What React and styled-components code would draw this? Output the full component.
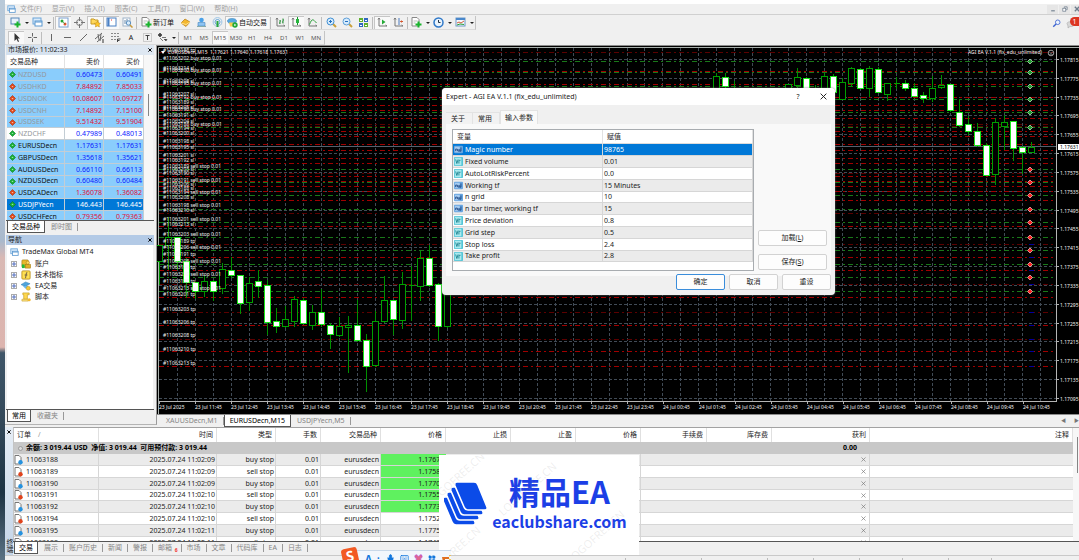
import React, { useState } from 'react'
import styled, { createGlobalStyle } from 'styled-components'
import { Mic, Keyboard, Shirt, LayoutGrid } from 'lucide-react'


const GlobalStyle = createGlobalStyle`
  * { box-sizing: border-box; }
  body {
    margin: 0;
    overflow: hidden;
    background: #f0f0f0;
    color: #1c1c1c;
    font: 7px/10px "Noto Sans", "Noto Sans CJK SC", sans-serif;
  }
  button {
    font: inherit;
    color: inherit;
    background: none;
    border: 0;
    padding: 0;
    margin: 0;
  }
  svg { display: block; flex: none; }
  table { border-collapse: separate; border-spacing: 0; table-layout: fixed; width: 100%; }
  th, td { padding: 0; font-weight: inherit; white-space: nowrap; overflow: hidden; }
`

const Screen = styled.div`
  display: flex;
  height: 100vh;
`

const Desktop = styled.div`
  width: 5px;
  flex: none;
  background: linear-gradient(#b9c9d8 0, #b4c4d6 30%, #a9b9cc 43%, #d9b9b4 46%, #dcb4ae 62%, #3f5668 63%, #34495a 75%, #1c3344 88%, #5b7284 100%);
`

const Window = styled.div`
  flex: 1;
  min-width: 0;
  display: flex;
  flex-direction: column;
  position: relative;
  overflow: hidden;
  border-top: 4px solid #fff;
`

/* ---------- menu and toolbars ---------- */

const MenuBar = styled.nav`
  display: flex;
  align-items: center;
  gap: 10px;
  height: 11px;
  flex: none;
  padding-left: 2px;
  border-bottom: 1px solid #d0d0d0;
  color: #a2a2a2;
  > svg { margin-right: -6px; }
`

const WindowControls = styled.div`
  display: flex;
  gap: 1px;
  margin: 0 -3px 0 auto;
  color: #6d7c8c;
`

const ControlButton = styled.button`
  display: flex;
  align-items: center;
  justify-content: center;
  width: 11px;
  height: 9px;
  background: #e6e6e6;
`

const ToolRow = styled.div`
  display: flex;
  align-items: flex-end;
  height: 15px;
  flex: none;
`

const ToolGroup = styled.div`
  display: flex;
  align-items: center;
  height: 14px;
  padding-left: 3px;
  border-right: 1px solid #c4c4c4;
  border-bottom: 1px solid #dadada;
`

const ToolButton = styled.button`
  display: flex;
  align-items: center;
  justify-content: center;
  gap: 1px;
  height: 13px;
  width: ${p => p.$width || 16}px;
  white-space: nowrap;
  font-size: ${p => p.$small ? 6 : 7}px;
  color: ${p => p.$small ? '#555' : '#111'};
  background: ${p => p.$on ? '#f9f9f9' : 'none'};
  box-shadow: ${p => p.$on ? 'inset 1px 1px 0 #c6c6c6' : 'none'};
`

const Separator = styled.div`
  width: 1px;
  height: 12px;
  margin: 0 1px;
  background: #bdbdbd;
`

const Caret = styled.span`
  border: 2px solid transparent;
  border-top-color: #222;
  border-bottom: 0;
  margin-left: 3px;
`

const ToolRight = styled.div`
  display: flex;
  align-items: center;
  gap: 5px;
  margin-left: auto;
`

const Notice = styled.button`
  position: relative;
  width: 13px;
  height: 13px;
`

const NoticeCount = styled.span`
  position: absolute;
  left: 4px;
  top: 0;
  width: 9px;
  height: 9px;
  border-radius: 5px 0 0 5px;
  background: #dc3522;
  color: #fff;
  line-height: 9px;
`

/* ---------- docked panels ---------- */

const Middle = styled.div`
  display: flex;
  height: 382px;
  flex: none;
`

const LeftColumn = styled.div`
  width: 152px;
  flex: none;
  display: flex;
  flex-direction: column;
  gap: 2px;
  padding: 0 2px 2px 1px;
  margin-bottom: 2px;
  border-right: 1px solid #9a9a9a;
  border-bottom: 1px solid #b4b4b4;
`

const Panel = styled.section`
  display: flex;
  flex-direction: column;
  min-height: 0;
  height: ${p => p.$height ? p.$height + 'px' : 'auto'};
  flex: ${p => p.$height ? 'none' : '1'};
`

const PanelTitle = styled.header`
  display: flex;
  justify-content: space-between;
  height: 10px;
  flex: none;
  padding-left: 2px;
  background: linear-gradient(90deg, ${p => p.$active ? '#b3cae6, #b3cae6' : '#d3e0ee, #dfe8f2'});
  color: #222;
`

const CloseButton = styled.button`
  display: flex;
  align-items: center;
  justify-content: center;
  width: 8px;
  height: 10px;
  color: ${p => p.$pale ? '#777' : '#000'};
`

const PanelBody = styled.div`
  flex: 1;
  min-height: 0;
  display: flex;
  overflow: hidden;
  background: #fff;
  margin: 0 1px;
`

const ScrollTrack = styled.div`
  width: ${p => p.$width}px;
  flex: none;
  background: #f7f7f7;
  padding: ${p => p.$top}px 0 0 4px;
`

const ScrollThumb = styled.div`
  width: 1px;
  height: ${p => p.$height}px;
  background: #858585;
`

const TabStrip = styled.div`
  display: flex;
  height: 13px;
  flex: none;
  padding-left: 1px;
  border-top: 1px solid #555;
`

const Tab = styled.button`
  position: relative;
  height: 12px;
  padding: 0 ${p => p.$on && !p.$wide ? 4 : 5}px;
  margin-right: 1px;
  white-space: nowrap;
  color: ${p => p.$on ? '#000' : '#858585'};
  background: ${p => p.$on ? '#fff' : 'none'};
  border: ${p => p.$on ? '1px solid #555' : '0'};
  border-top: 0;
  &::after {
    content: "";
    display: ${p => p.$on ? 'none' : 'block'};
    position: absolute;
    right: -1px;
    top: 2px;
    width: 1px;
    height: 8px;
    background: #999;
  }
`

const RatesTable = styled.table`
  th {
    height: 14px;
    border-bottom: 1px solid #ccc;
    border-right: 1px solid #e2e2e2;
    padding: 0 3px;
    text-align: right;
  }
  th:first-child { text-align: left; }
`

const RateRow = styled.tr`
  height: 12px;
  background: ${p => p.$selected ? '#0078d7' : p.$plain ? '#fff' : '#8acdfc'};
  color: ${p => p.$selected ? '#fff' : p.$down ? '#e00f38' : '#0c20ff'};
  &:nth-child(5n) { height: 11px; }
  td {
    border-bottom: 1px solid #c3cdd4;
    border-right: 1px solid #c3cdd4;
    padding-right: 1px;
    text-align: right;
  }
`

const SymbolName = styled.div`
  display: flex;
  align-items: center;
  gap: 2px;
  padding-left: 2px;
  color: ${p => p.$selected ? '#fff' : p.$dim ? '#94989c' : '#111'};
`

const Tree = styled.ul`
  list-style: none;
  margin: 0;
  padding: 1px 0 0 3px;
`

const TreeItem = styled.li`
  display: flex;
  align-items: center;
  gap: ${p => p.$root ? 3 : 4}px;
  height: ${p => p.$root ? 12 : 11}px;
  padding-left: ${p => p.$root ? 0 : 1}px;
`

const Expander = styled.button`
  display: flex;
  align-items: center;
  justify-content: center;
  width: 6px;
  height: 6px;
  border: 1px solid #ababab;
`

/* ---------- chart ---------- */

const ChartColumn = styled.main`
  position: relative;
  flex: 1;
  min-width: 0;
  display: flex;
  flex-direction: column;
  border-top: 1px solid #8a8a8a;
`

const ChartSvg = styled.svg`
  width: 100%;
  height: 368px;
  background: #000;
  font-size: 5px;
  fill: #f2f2f2;
`

const ChartTabs = styled.div`
  display: flex;
  height: 13px;
  flex: none;
  padding: 0 0 0 4px;
  border-top: 1px solid #8c8c8c;
`

const TabArrows = styled.span`
  margin-left: auto;
  display: flex;
  gap: 8px;
  color: #777;
  font-size: 5px;
`

/* ---------- dialog ---------- */

const Dialog = styled.div`
  position: absolute;
  left: 285px;
  top: 42px;
  width: 393px;
  border-radius: 4px;
  overflow: hidden;
  background: #f0f0f0;
  box-shadow: 0 0 2px #777;
  padding-bottom: 5px;
`

const DialogTitle = styled.header`
  display: flex;
  align-items: center;
  height: 17px;
  padding: 0 7px 0 4px;
  background: #fff;
`

const DialogTitleButton = styled.button`
  width: 10px;
  margin-left: ${p => p.$first ? 'auto' : '15px'};
  svg { margin: 0 auto; }
`

const DialogTabs = styled.div`
  display: flex;
  align-items: flex-end;
  height: 19px;
  padding-left: 4px;
`

const DialogTab = styled.button`
  height: ${p => p.$on ? 14 : 12}px;
  padding: ${p => p.$on ? '0 4px' : '0 7px 0 5px'};
  border: 1px solid #e3e3e3;
  border-bottom: 0;
  border-left-width: ${p => p.$on ? 1 : 0}px;
  background: ${p => p.$on ? '#f9f9f9' : '#f2f2f2'};
`

const DialogPanel = styled.div`
  display: flex;
  gap: 4px;
  margin: 0 4px;
  padding: 5px 4px 5px 6px;
  background: #f9f9f9;
`

const ParamBox = styled.div`
  width: 302px;
  height: 142px;
  border: 1px solid #a8acb0;
  background: #fff;
`

const ParamTable = styled.table`
  th {
    height: 14px;
    text-align: left;
    padding-left: 4px;
    border-bottom: 1px solid #dcdcdc;
    border-right: 1px solid #e2e2e2;
  }
`

const ParamRow = styled.tr`
  height: 12px;
  background: ${p => p.$selected ? '#0078d7' : p.$odd ? '#ebebeb' : '#fff'};
  color: ${p => p.$selected ? '#fff' : '#222'};
  &:nth-child(5n) { height: 11px; }
  td {
    border-bottom: 1px solid #d6d6d6;
    border-right: 1px solid #d6d6d6;
    padding-left: 1px;
  }
`

const IconText = styled.div`
  display: flex;
  align-items: center;
  gap: ${p => p.$gap || 2}px;
`

const SideButtons = styled.div`
  flex: 1;
  display: flex;
  flex-direction: column;
  justify-content: flex-end;
  gap: 8px;
  padding-bottom: 1px;
`

const PushButton = styled.button`
  height: 16px;
  width: ${p => p.$width ? p.$width + 'px' : 'auto'};
  border: 1px solid ${p => p.$primary ? '#3a8ddb' : '#d2d2d2'};
  border-radius: 2px;
  background: #fdfdfd;
`

const DialogFooter = styled.footer`
  display: flex;
  justify-content: flex-end;
  gap: 4px;
  margin-top: -2px;
  padding-right: 4px;
`

/* ---------- terminal ---------- */

const Terminal = styled.section`
  display: flex;
  position: relative;
  height: 129px;
  flex: none;
  border-bottom: 1px solid #c9c9c9;
`

const TerminalSide = styled.div`
  width: 8px;
  flex: none;
  display: flex;
  flex-direction: column;
  justify-content: space-between;
  background: linear-gradient(#e6edf5, #c4d5e8);
  padding-bottom: 2px;
`

const SideLabel = styled.span`
  writing-mode: vertical-rl;
  line-height: 8px;
`

const TerminalMain = styled.div`
  flex: 1;
  min-width: 0;
  display: flex;
  flex-direction: column;
`

const OrdersBox = styled.div`
  display: flex;
  height: 114px;
  overflow: hidden;
  background: #fff;
  border-top: 1px solid #a2a2a2;
  border-left: 1px solid #c4c4c4;
`

const OrdersTable = styled.table`
  flex: 1;
  th {
    height: 14px;
    padding: 0 3px;
    text-align: right;
    border-right: 1px solid #e0e0e0;
  }
  th:first-child { text-align: left; }
`

const SortMark = styled.span`
  margin-left: 7px;
  color: #999;
`

const TotalRow = styled.tr`
  height: 12px;
  background: #c8c8c8;
  font-weight: bold;
  color: #000;
  td { padding-left: 4px; }
  td + td { padding-right: 13px; text-align: right; }
`

const OrderRow = styled.tr`
  height: 12px;
  background: ${p => p.$odd ? '#fff' : '#ebebeb'};
  &:nth-child(5n) { height: 11px; }
  td {
    border-bottom: 1px solid #d6d6d6;
    padding-right: 1px;
    text-align: right;
  }
  td:nth-child(-n+5), td:nth-child(9), td:nth-child(12) { border-right: 1px solid #d6d6d6; }
  td:nth-child(6) {
    background: ${p => p.$hit ? '#5ff15f' : 'none'};
    padding-right: 4px;
  }
`

const DeleteCell = styled.td`
  ${CloseButton} { margin: 0 1px 0 auto; }
`

const MailCount = styled.span`
  position: absolute;
  right: 3px;
  top: 3px;
  font-size: 5px;
  font-weight: bold;
  color: #f23030;
`

const StatusBar = styled.div`
  display: flex;
  justify-content: flex-end;
  flex: 1;
  padding: 2px 43px 0 0;
`

const StatusCell = styled.span`
  width: ${p => p.$width}px;
  border-left: 1px solid #bbb;
`

const LogoCard = styled.div`
  position: absolute;
  left: 434px;
  top: 28px;
  width: 200px;
  height: 100px;
  overflow: hidden;
  background: #fff;
  color: #1c3fe6;
  display: flex;
  align-items: center;
  padding: 0 12px 2px 5px;
  gap: 4px;
  font-family: "Noto Sans CJK SC", sans-serif;
  font-weight: bold;
  text-align: center;
`

const LogoWords = styled.div`
  flex: 1;
`

const LogoName = styled.div`
  font-size: 31px;
  line-height: 36px;
  margin-top: -4px;
  white-space: nowrap;
`

const LogoSite = styled.div`
  font-size: 16px;
  line-height: 20px;
  margin-top: 2px;
`

const Watermark = styled.span`
  position: absolute;
  left: ${p => p.$x}px;
  top: ${p => p.$y}px;
  transform: rotate(-42deg);
  font: 11px/12px "Noto Sans", sans-serif;
  color: rgba(150, 150, 150, 0.16);
  white-space: nowrap;
`

const InputBar = styled.div`
  position: absolute;
  left: 340px;
  top: 546px;
  width: 106px;
  height: 16px;
  display: flex;
  align-items: center;
  gap: 5px;
  padding-left: 20px;
  border-top: 1px solid #c8d8e8;
  background: #f2f7fc;
  color: #1277dd;
`

const InputLogo = styled.span`
  position: absolute;
  left: -3px;
  top: -3px;
  width: 16px;
  height: 16px;
  border-radius: 3px;
  background: #f25a24;
  color: #fff;
  font-size: 14px;
  line-height: 16px;
  font-weight: bold;
  text-align: center;
  transform: rotate(-12deg);
`

const InputMode = styled.span`
  font-size: 10px;
  font-weight: bold;
`


const axes = <path d="M2 1v8h8M1 2.500L2 1l1 1.500M8.500 8L10 9" stroke="#777" fill="none" />
const plus = <path d="M7.500 4.500v6M4.500 7.500h6" stroke="#18b42c" strokeWidth="2" />

const drawings = {
    windows: <><rect x="1" y="1" width="8" height="6" fill="#d9ebfb" stroke="#6ba4d8" /><rect x="3" y="4" width="7" height="5" fill="#fff" stroke="#5b98d0" /><path d="M3 5h7" stroke="#5b98d0" /></>,
    newChart: <><rect x="1" y="1" width="8" height="6" fill="#e8f2fb" stroke="#5686b8" />{plus}</>,
    market: <><rect x="1" y="1" width="9" height="9" fill="#fff" stroke="#7aa0d0" /><circle cx="4" cy="4" r="1.500" fill="#22a532" /><circle cx="7" cy="7" r="1.500" fill="#e2502c" /><path d="M4 4l3 3" stroke="#22a532" strokeWidth=".7" /></>,
    target: <><circle cx="5.500" cy="5.500" r="3" fill="none" stroke="#777" /><path d="M5.500 0v4M5.500 7v4M0 5.500h4M7 5.500h4" stroke="#777" /></>,
    folderStar: <><path d="M1 2h3l1 1h3v4H1z" fill="#ffd95c" stroke="#c79a27" /><path d="M7.500 4l1 2 2 .3-1.500 1.400.4 2.300-2-1-2 1 .4-2.300L4.300 6.300l2.200-.3z" fill="#ffc828" stroke="#b98718" strokeWidth=".5" /></>,
    terminal: <><rect x="1" y="1" width="9" height="8" fill="#fff" stroke="#4a80c4" /><path d="M2.500 1v8" stroke="#4a80c4" strokeWidth="2" /><path d="M5 3h1" stroke="#e33" /></>,
    tester: <><rect x="1" y="1" width="7" height="8" fill="#fff" stroke="#9db2c8" /><path d="M3 3v4M5 2v4" stroke="#68a" /><circle cx="6.500" cy="6" r="2.200" fill="#d8ecfc" stroke="#5c8fc0" /><path d="M8 8l2.500 2.500" stroke="#c89a3a" strokeWidth="1.500" /></>,
    order: <><path d="M1 .5h5l2 2V9H1z" fill="#fff" stroke="#888" /><path d="M2.500 4h4M2.500 6h2" stroke="#bbb" />{plus}</>,
    gold: <><path d="M1 6l4-4 5 3-4 4.500z" fill="#f4b72e" stroke="#b47a14" strokeWidth=".7" /><path d="M1 6l5 1.500 4-2.500" stroke="#ffe08a" fill="none" /></>,
    person: <><circle cx="5.500" cy="3" r="2.300" fill="#4aa0e8" /><path d="M2 9V5.500h7V9z" fill="#8dc4f2" stroke="#4585c0" strokeWidth=".6" /><path d="M1 9.500h9" stroke="#8aa" /></>,
    signal: <><circle cx="5.500" cy="5" r="4.400" fill="none" stroke="#9bc3e4" /><circle cx="5.500" cy="5" r="2.500" fill="none" stroke="#63a4d8" /><path d="M5.500 4v6" stroke="#28a53c" strokeWidth="2" /></>,
    expert: <><ellipse cx="5" cy="4" rx="4.500" ry="2.500" fill="#56a9e2" stroke="#2a78b4" strokeWidth=".5" /><path d="M2 5.500h5l-1 4h-3z" fill="#f5cf4c" /><circle cx="8" cy="8" r="2.700" fill="#22aa35" /><path d="M7.300 6.700v2.600l2-1.300z" fill="#fff" /></>,
    bars: <>{axes}<path d="M5 3v4M4 6h1M5 4h1M8 1.500v5M7 5h1M8 3h1" stroke="#2b8f3a" fill="none" /></>,
    candles: <>{axes}<path d="M6.500 0v8" stroke="#16992c" /><rect x="5" y="2" width="3" height="4" fill="#25b43c" /></>,
    line: <>{axes}<path d="M2.500 7.500C5 1 6 2 9.500 6" stroke="#2b9f3a" fill="none" /></>,
    zoomIn: <><path d="M7 7l3 3" stroke="#caa13c" strokeWidth="2" /><circle cx="4.500" cy="4.500" r="3.500" fill="#d6ebfc" stroke="#3f8fd4" /><path d="M3 4.500h3M4.500 3v3" stroke="#2470c0" /></>,
    zoomOut: <><path d="M7 7l3 3" stroke="#caa13c" strokeWidth="2" /><circle cx="4.500" cy="4.500" r="3.500" fill="#d6ebfc" stroke="#5f9fd8" /><path d="M3 4.500h3" stroke="#2470c0" /></>,
    tiles: <><path d="M1 1h4v4H1zM6 6h4v4H6z" fill="#5fb02c" /><path d="M6 1h4v4H6zM1 6h4v4H1z" fill="#3068c0" /><path d="M2 3.500h2M7 3.500h2M2 8.500h2M7 8.500h2" stroke="#fff" /></>,
    scroll: <>{axes}<path d="M5 2.500v5l3.500-2.500z" fill="#26aa38" /></>,
    shift: <>{axes}<path d="M6 1v7" stroke="#4a7ac0" /><path d="M10 4.500H7.500M8.500 3.500l-1 1 1 1" stroke="#d4542c" fill="none" /></>,
    clock: <><circle cx="5.500" cy="5.500" r="4.500" fill="#eaf4fd" stroke="#2f78c8" strokeWidth="1.500" /><path d="M5.500 3v2.500h2" stroke="#234" fill="none" /></>,
    template: <><rect x="1" y="1" width="9" height="8" fill="#f4f9fe" stroke="#6d98c4" /><path d="M1 2h9" stroke="#4a88cc" strokeWidth="2" /><path d="M2 6l2-1 2 1 3-2" stroke="#d45a3c" fill="none" /><path d="M2 8l3-1 4 .5" stroke="#2b9f3a" fill="none" /></>,
    cursor: <path d="M3.500 1v8l2-2 1.500 3 1-.5L6.700 6.500H9z" fill="#333" />,
    cross: <path d="M5.500 1v3.500M5.500 6.500V10M1 5.500h3.500M6.500 5.500H10" stroke="#666" />,
    vline: <path d="M5.500 2v7" stroke="#666" />,
    hline: <path d="M2 5.500h7" stroke="#666" />,
    trend: <path d="M2 9l7-7" stroke="#666" />,
    channel: <><path d="M1 7l7-6M3 10l7-6M4 2l1 6M7 2l-1 7" stroke="#666" fill="none" /><path d="M8 8h2M8 10h2" stroke="#333" /></>,
    fibo: <><path d="M1 1.500h9M1 4.500h9M1 7.500h5" stroke="#888" strokeDasharray="2 1" /><path d="M7.500 10V7h3M7.500 8.500h2" stroke="#444" fill="none" /></>,
    label: <><rect x="1.500" y="1.500" width="8" height="8" fill="none" stroke="#aaa" strokeDasharray="1 1" /><path d="M3.500 3.500h4M5.500 3.500V8" stroke="#444" /></>,
    arrows: <path d="M1 3l2-2 2 2-2 2zM5 5.500h4M7 7l2 2 1-2M3 6l3 3" stroke="#444" fill="#444" strokeWidth=".7" />,
    search: <><circle cx="7" cy="4" r="2.800" fill="#eaf2fd" stroke="#3b62d0" /><path d="M5 6L1.500 9.500" stroke="#3b62d0" strokeWidth="1.700" /></>,
    bubble: <path d="M1 5.500C1 3 9 3 9 5.500S5 9 4 8.500L2 10V8z" fill="#d8d8d8" stroke="#aaa" strokeWidth=".6" />,
    accounts: <><rect x="1" y="1" width="7" height="8" rx="1" fill="#e7b92c" stroke="#a27a10" strokeWidth=".7" /><circle cx="7.500" cy="4" r="1.800" fill="#ffd95c" stroke="#a27a10" strokeWidth=".6" /><rect x="5" y="6" width="5.500" height="4" fill="#e0b028" stroke="#a27a10" strokeWidth=".6" /><path d="M1 6h3v4H1z" fill="#22b83a" /></>,
    indicator: <><rect x="1" y="1" width="9" height="9" rx="1" fill="#ffe052" stroke="#bd9220" /><path d="M7 3H6L5 9M4 5.500h3" stroke="#654" fill="none" /></>,
    advisor: <><path d="M0 4l5-3 5 2-5 3z" fill="#4fa4dc" stroke="#2a76ac" strokeWidth=".5" /><path d="M2 5.500l3 3 3-3" fill="#68b8ea" /><circle cx="8" cy="8" r="2.200" fill="#f4c83c" stroke="#b48a18" strokeWidth=".5" /></>,
    script: <><path d="M2 1h7v2H7v5H3V3H2z" fill="#ffd84e" stroke="#c09820" strokeWidth=".7" /><path d="M1 8h7v2H1z" fill="#ffe584" stroke="#c09820" strokeWidth=".6" /><circle cx="9" cy="8.500" r="1.700" fill="#f4b82c" /></>,
    intParam: <><rect x="0" y="1" width="11" height="9" rx="1" fill="#67a5e0" /><path d="M1 2h6v7H1z" fill="#a5cbf0" /><path d="M2 7.500V5h2v2.500M5 5v2.500h2V5M8.500 3v4.500H7" stroke="#17417e" fill="none" /></>,
    realParam: <><rect x="0" y="0" width="11" height="11" rx="1" fill="#53c5d6" /><path d="M1 1h8v9H1z" fill="#a9e9ee" /><path d="M2 3l1.500 5L5 3M6 8V4h2" stroke="#137a88" fill="none" /></>,
    minimize: <path d="M3 8h5" stroke="currentColor" strokeWidth="1.500" />,
    restore: <><path d="M4.500 4V2.500h4v4H7" fill="none" stroke="currentColor" /><rect x="2.500" y="4.500" width="4" height="4" fill="#fff" stroke="currentColor" /></>,
    close: <path d="M2.500 2.500l6 6M8.500 2.500l-6 6" stroke="currentColor" strokeWidth="1.800" />,
    thinClose: <path d="M1 1l9 9M10 1l-9 9" stroke="currentColor" strokeWidth="1.500" />,
    expand: <path d="M5.500 0v11M0 5.500h11" stroke="#5873c0" strokeWidth="3" />,
}

const Icon = ({ name, size = 11 }) => (
    <svg width={size} height={size} viewBox="0 0 11 11" aria-hidden="true">{drawings[name]}</svg>
)

const Tick = ({ down }) => (
    <svg width="7" height="7" viewBox="0 0 7 7" aria-hidden="true">
        <path d="M3.500 .5l3 3-3 3-3-3z" fill={down ? '#e2491c' : '#19b035'} stroke={down ? '#a3330f' : '#0d7a22'} strokeWidth=".6" />
        <path d={down ? 'M2.500 3h2l-1 1.500z' : 'M2.500 4h2l-1-1.500z'} fill="#fff" opacity=".6" />
    </svg>
)

const OrderIcon = ({ sell }) => (
    <svg width="9" height="10" viewBox="0 0 9 10" aria-hidden="true">
        <path d="M1 .5h4l2 2V9H1z" fill="#fff" stroke="#777" />
        <circle cx="6.500" cy="7.300" r="2.200" fill={sell ? '#e0431c' : '#2492e0'} />
    </svg>
)


const menus = ['文件(F)', '显示(V)', '插入(I)', '图表(C)', '工具(T)', '窗口(W)', '帮助(H)']

const rates = [
    ['NZDUSD', '0.60473', '0.60491', 0, 1],
    ['USDHKD', '7.84892', '7.85033', 1, 1],
    ['USDNOK', '10.08607', '10.09727', 1, 1],
    ['USDCNH', '7.14892', '7.15100', 1, 1],
    ['USDSEK', '9.51432', '9.51904', 1, 1],
    ['NZDCHF', '0.47989', '0.48013', 0, 1],
    ['EURUSDecn', '1.17631', '1.17631', 0, 0],
    ['GBPUSDecn', '1.35618', '1.35621', 0, 0],
    ['AUDUSDecn', '0.66110', '0.66113', 0, 0],
    ['NZDUSDecn', '0.60480', '0.60484', 0, 0],
    ['USDCADecn', '1.36078', '1.36082', 1, 0],
    ['USDJPYecn', '146.443', '146.445', 0, 0],
    ['USDCHFecn', '0.79356', '0.79363', 1, 0],
]

const navItems = [
    ['accounts', '账户'],
    ['indicator', '技术指标'],
    ['advisor', 'EA交易'],
    ['script', '脚本'],
]

const params = [
    ['Magic number', '98765', 'intParam'],
    ['Fixed volume', '0.01', 'realParam'],
    ['AutoLotRiskPercent', '0.0', 'realParam'],
    ['Working tf', '15 Minutes', 'intParam'],
    ['n grid', '10', 'intParam'],
    ['n bar timer, working tf', '15', 'intParam'],
    ['Price deviation', '0.8', 'realParam'],
    ['Grid step', '0.5', 'realParam'],
    ['Stop loss', '2.4', 'realParam'],
    ['Take profit', '2.8', 'realParam'],
]

const orders = [
    ['11063188', '09', 'buy', '1.1767', 1],
    ['11063189', '09', 'sell', '1.1758', 1],
    ['11063190', '09', 'buy', '1.1770', 1],
    ['11063191', '10', 'sell', '1.1755', 1],
    ['11063192', '10', 'buy', '1.1773', 1],
    ['11063194', '10', 'sell', '1.1752', 0],
    ['11063195', '11', 'buy', '1.1775', 0],
    ['11063198', '11', 'sell', '1.1749', 0],
]

const orderColumns = [
    ['订单', 85], ['时间', 118], ['类型', 59], ['手数', 45], ['交易品种', 60], ['价格', 65], ['止损', 65],
    ['止盈', 65], ['价格', 65], ['手续费', 66], ['库存费', 65], ['获利', 98], ['注释', null],
]

// bar number, high, body top, body bottom, low, falling
const candles = [
    [0, 245, 245, 261, 285, 0], [1, 217, 237, 245, 270, 0], [2, 237, 237, 261, 270, 1], [3, 258, 261, 282, 298, 1],
    [4, 282, 282, 291, 299, 1], [5, 275, 281, 291, 297, 0], [6, 280, 281, 291, 301, 1], [7, 263, 269, 288, 294, 0],
    [8, 257, 270, 275, 278, 1], [9, 275, 275, 303, 314, 1], [10, 277, 283, 302, 311, 0], [11, 270, 281, 286, 298, 1],
    [12, 280, 285, 322, 335, 1], [13, 308, 321, 326, 333, 1], [14, 306, 319, 326, 328, 0], [15, 296, 299, 321, 327, 0],
    [16, 298, 300, 323, 324, 1], [17, 305, 312, 325, 330, 0], [18, 289, 312, 324, 327, 1], [19, 323, 325, 334, 349, 1],
    [20, 317, 326, 335, 337, 0], [21, 316, 325, 327, 373, 0], [22, 300, 325, 340, 342, 1], [23, 334, 340, 366, 392, 1],
    [24, 311, 321, 365, 367, 0], [25, 276, 300, 321, 323, 0], [26, 300, 300, 319, 335, 1], [27, 272, 284, 320, 329, 0],
    [28, 266, 285, 285, 321, 0], [29, 251, 258, 286, 301, 0], [30, 245, 258, 285, 287, 1], [31, 283, 284, 326, 341, 1],
    [32, 250, 260, 326, 328, 0],
    [62, 73, 76, 100, 104, 0], [63, 73, 77, 86, 100, 1], [64, 81, 88, 100, 104, 0], [70, 84, 84, 100, 104, 0],
    [71, 68, 77, 85, 88, 0], [72, 77, 78, 92, 100, 1], [73, 85, 90, 100, 104, 0], [74, 73, 76, 100, 104, 0],
    [75, 74, 76, 92, 100, 1], [76, 78, 82, 99, 100, 0], [77, 67, 68, 83, 87, 0], [78, 68, 69, 88, 89, 1],
    [79, 66, 68, 88, 97, 0], [80, 67, 69, 92, 93, 1], [81, 83, 83, 94, 101, 0], [82, 77, 83, 83, 89, 0],
    [83, 80, 83, 88, 91, 1], [84, 83, 88, 96, 96, 1], [85, 92, 95, 98, 103, 1], [86, 76, 88, 98, 102, 0],
    [87, 75, 85, 87, 89, 0], [88, 84, 84, 110, 112, 1], [89, 99, 112, 125, 127, 1], [90, 116, 124, 131, 135, 1],
    [91, 123, 131, 145, 147, 1], [92, 143, 145, 175, 175, 1], [93, 118, 122, 174, 185, 0], [94, 115, 122, 126, 150, 0],
    [95, 121, 121, 148, 161, 1], [96, 146, 147, 152, 174, 1], [97, 142, 147, 152, 153, 0],
]

const buyStops = [61, 72, 86, 99, 112, 127]
const sellStops = [169, 182, 195, 209, 222, 237, 250, 264, 277, 291]
const stopLines = [71, 84, 97, 105, 110, 118, 131, 136, 144, 150, 158, 163, 176, 181, 186, 191, 200, 226, 257, 270, 297, 325, 351, 366]
const faintStopLines = [52, 124, 126, 173, 213, 244, 284, 312, 339]

const orderLabels = [
    [50, '188 tp'], [58, '202 buy stop 0.01'], [68, '214 sl'], [70, '200 buy stop 0.01'], [81, '208 sl'],
    [83, '195 buy stop 0.01'], [94, '207 sl'], [97, '192 buy stop 0.01'], [102, '189 sl'], [107, '205 sl'],
    [109, '190 buy stop 0.01'], [115, '191 sl'], [121, '204 sl'], [124, '188 buy stop 0.01'], [128, '194 sl'],
    [133, '200 sl'], [141, '198 sl'], [147, '195 sl'], [155, '201 sl'], [160, '192 sl'], [166, '189 sell stop 0.01'],
    [169, '203 sl'], [173, '190 sl'], [180, '191 sell stop 0.01'], [184, '206 sl'], [188, '188 sl'],
    [192, '194 sell stop 0.01'], [197, '208 sl'], [205, '198 sell stop 0.01'], [210, '210 sl'],
    [219, '201 sell stop 0.01'], [224, '213 sl'], [234, '203 sell stop 0.01'], [241, '189 tp'],
    [247, '206 sell stop 0.01'], [254, '191 tp'], [261, '208 sell stop 0.01'], [267, '194 tp'],
    [274, '210 sell stop 0.01'], [281, '198 tp'], [288, '213 sell stop 0.01'], [294, '201 tp'],
    [309, '203 tp'], [322, '206 tp'], [335, '208 tp'], [349, '210 tp'], [363, '213 tp'],
]

const priceY = i => Math.round(60 + i * 18.83)
const times = Array.from({ length: 25 }, (_, i) => {
    if (i === 0) return '23 Jul 2025'
    const hour = 10 + i
    return hour < 24 ? `23 Jul ${hour}:45` : `24 Jul ${String(hour - 24).padStart(2, '0')}:45`
})


const Level = ({ y, color }) => (
    <path d={`M159 ${y + 0.5}H1056`} stroke={color} strokeDasharray="5 3 2 3" />
)

const Candle = ({ bar: [i, high, top, bottom, low, falling] }) => {
    const x = Math.round(159 + i * 8.99)
    return (
        <g stroke={falling ? '#19e619' : '#00a000'} fill={falling ? '#fff' : '#000'}>
            <path d={`M${x + 0.5} ${high}V${low}`} stroke="#009000" />
            {top === bottom
                ? <path d={`M${x - 2} ${top + 0.5}h6`} />
                : <rect x={x - 2.5} y={top + 0.5} width="6" height={bottom - top} />}
        </g>
    )
}

const Chart = () => (
    <ChartSvg viewBox="157 46 922 368" preserveAspectRatio="xMinYMin slice" role="img" aria-label="EURUSDecn M15">
        <path d="M158.500 414V47.500H1079" stroke="#a9b0ac" fill="none" />
        <g stroke="#414b56" strokeDasharray="3 2">
            {Array.from({ length: 49 }, (_, i) => <path key={i} d={`M${Math.round(177 + i * 17.98) + 0.5} 48V401`} />)}
            {Array.from({ length: 19 }, (_, i) => <path key={i} d={`M159 ${priceY(i) - 0.5}H1056`} />)}
        </g>
        {faintStopLines.map(y => <Level key={y} y={y} color="#5c0000" />)}
        {stopLines.map(y => <Level key={y} y={y} color="#a00000" />)}
        {[...buyStops, ...sellStops].map(y => <Level key={y} y={y} color="#197819" />)}
        <path d="M159 146.500H1056" stroke="#56616e" />
        {[244, 257, 270, 284, 312, 325, 339, 351, 366].map(y => <path key={y} d={`M1029 ${y + 0.5}h5`} stroke="#00009c" />)}
        {candles.map(bar => <Candle key={bar[0]} bar={bar} />)}
        {buyStops.map(y => <path key={y} d={`M1030 ${y - 2}l2.500 2.500-2.500 2.500-2.500-2.500z`} fill="#1d9a2d" stroke="#cfe8cf" strokeWidth=".7" />)}
        {sellStops.map(y => <path key={y} d={`M1030 ${y - 2}l2.500 2.500-2.500 2.500-2.500-2.500z`} fill="#ff2020" stroke="#f4d0d0" strokeWidth=".7" />)}

        {orderLabels.map(([y, text]) => <text key={y} x="163" y={y + 2}>#11063{text}</text>)}
        <path d="M161 51h4l-2 3z" fill="#fff" />
        <text x="168" y="54" xmlSpace="preserve">EURUSDecn,M15  1.17621 1.17640 1.17618 1.17631</text>
        <text x="968" y="54">AGI EA V.1.1 (fix_edu_unlimited)</text>
        <g fill="none" stroke="#ddd" strokeWidth=".7">
            <circle cx="1051" cy="53" r="2.800" />
            <path d="M1049.500 54.500q1.500-1.500 3 0M1050 52v.7M1052 52v.7" />
        </g>

        <path d="M1056.500 48V401.500M159 401.500H1057" stroke="#b4b4b4" />
        {times.map((label, i) => (
            <g key={label}>
                <path d={`M${159 + i * 36}.5 402v2`} stroke="#b4b4b4" />
                <text x={159 + i * 36} y="409">{label}</text>
            </g>
        ))}
        {Array.from({ length: 19 }, (_, i) => (
            <g key={i}>
                <path d={`M1057 ${priceY(i) - 0.5}h2`} stroke="#b4b4b4" />
                <text x="1060" y={priceY(i) + 2}>{`1.${17815 - i * 40}`}</text>
            </g>
        ))}
        <rect x="1058" y="144" width="21" height="6" fill="#fff" />
        <text x="1060" y="149" fill="#000">1.17631</text>
    </ChartSvg>
)

const Toolbars = () => (
    <>
        <ToolRow>
            <ToolGroup>
                <ToolButton $width={22} aria-label="New chart"><Icon name="newChart" /><Caret /></ToolButton>
                <ToolButton $width={22} aria-label="Profiles"><Icon name="windows" /><Caret /></ToolButton>
                <Separator />
                <ToolButton $on aria-label="Market watch"><Icon name="market" /></ToolButton>
                <ToolButton aria-label="Data window"><Icon name="target" /></ToolButton>
                <ToolButton $on aria-label="Navigator"><Icon name="folderStar" /></ToolButton>
                <ToolButton $on aria-label="Terminal"><Icon name="terminal" /></ToolButton>
                <ToolButton aria-label="Tester"><Icon name="tester" /></ToolButton>
                <Separator />
                <ToolButton $width={39}><Icon name="order" />新订单</ToolButton>
                <ToolButton aria-label="MetaEditor"><Icon name="gold" /></ToolButton>
                <ToolButton aria-label="Community"><Icon name="person" /></ToolButton>
                <ToolButton aria-label="Signals"><Icon name="signal" /></ToolButton>
                <ToolButton $on $width={44}><Icon name="expert" />自动交易</ToolButton>
                <Separator />
                <ToolButton aria-label="Bars"><Icon name="bars" /></ToolButton>
                <ToolButton $on aria-label="Candles"><Icon name="candles" /></ToolButton>
                <ToolButton aria-label="Line"><Icon name="line" /></ToolButton>
                <Separator />
                <ToolButton aria-label="Zoom in"><Icon name="zoomIn" /></ToolButton>
                <ToolButton aria-label="Zoom out"><Icon name="zoomOut" /></ToolButton>
                <ToolButton aria-label="Tile"><Icon name="tiles" /></ToolButton>
                <Separator />
                <ToolButton $on aria-label="Auto scroll"><Icon name="scroll" /></ToolButton>
                <ToolButton aria-label="Shift"><Icon name="shift" /></ToolButton>
                <Separator />
                <ToolButton $width={22} aria-label="Indicators"><Icon name="order" /><Caret /></ToolButton>
                <ToolButton $width={22} aria-label="Periods"><Icon name="clock" /><Caret /></ToolButton>
                <ToolButton $width={22} aria-label="Templates"><Icon name="template" /><Caret /></ToolButton>
            </ToolGroup>
            <ToolRight>
                <button aria-label="Search"><Icon name="search" size={9} /></button>
                <Notice aria-label="Messages"><Icon name="bubble" /><NoticeCount>1</NoticeCount></Notice>
            </ToolRight>
        </ToolRow>
        <ToolRow>
            <ToolGroup>
                <ToolButton $on aria-label="Cursor"><Icon name="cursor" /></ToolButton>
                <ToolButton aria-label="Crosshair"><Icon name="cross" /></ToolButton>
                <Separator />
                <ToolButton aria-label="Vertical line"><Icon name="vline" /></ToolButton>
                <ToolButton aria-label="Horizontal line"><Icon name="hline" /></ToolButton>
                <ToolButton aria-label="Trend line"><Icon name="trend" /></ToolButton>
                <ToolButton aria-label="Channel"><Icon name="channel" /></ToolButton>
                <ToolButton aria-label="Fibonacci"><Icon name="fibo" /></ToolButton>
                <ToolButton>A</ToolButton>
                <ToolButton aria-label="Text label"><Icon name="label" /></ToolButton>
                <ToolButton $width={22} aria-label="Arrows"><Icon name="arrows" /><Caret /></ToolButton>
                <Separator />
                {['M1', 'M5', 'M15', 'M30', 'H1', 'H4', 'D1', 'W1', 'MN'].map(period => (
                    <ToolButton key={period} $small $on={period === 'M15'}>{period}</ToolButton>
                ))}
            </ToolGroup>
        </ToolRow>
    </>
)

const MarketWatch = () => {
    const [selected, setSelected] = useState('USDJPYecn')

    return (
        <Panel $height={188}>
            <PanelTitle>市场报价: 11:02:33<CloseButton aria-label="Close"><Icon name="close" size={6} /></CloseButton></PanelTitle>
            <PanelBody>
                <div>
                    <RatesTable>
                        <colgroup><col width="58" /><col width="39" /><col width="40" /></colgroup>
                        <thead><tr><th>交易品种</th><th>卖价</th><th>买价</th></tr></thead>
                        <tbody>
                            {rates.map(([name, bid, ask, down, dim]) => (
                                <RateRow key={name} $down={down} $plain={name === 'NZDCHF'} $selected={name === selected} onClick={() => setSelected(name)}>
                                    <td><SymbolName $dim={dim} $selected={name === selected}><Tick down={down} />{name}</SymbolName></td>
                                    <td>{bid}</td>
                                    <td>{ask}</td>
                                </RateRow>
                            ))}
                        </tbody>
                    </RatesTable>
                </div>
                <ScrollTrack $width={10} $top={39}><ScrollThumb $height={22} /></ScrollTrack>
            </PanelBody>
            <TabStrip>
                <Tab $on>交易品种</Tab>
                <Tab>即时图</Tab>
            </TabStrip>
        </Panel>
    )
}

const Navigator = () => (
    <Panel>
        <PanelTitle $active>导航<CloseButton aria-label="Close"><Icon name="close" size={6} /></CloseButton></PanelTitle>
        <PanelBody>
            <Tree>
                <TreeItem $root><Icon name="windows" size={9} />TradeMax Global MT4</TreeItem>
                {navItems.map(([icon, name]) => (
                    <TreeItem key={name}><Expander aria-label={name}><Icon name="expand" size={4} /></Expander><Icon name={icon} size={10} />{name}</TreeItem>
                ))}
            </Tree>
        </PanelBody>
        <TabStrip>
            <Tab $on>常用</Tab>
            <Tab>收藏夹</Tab>
        </TabStrip>
    </Panel>
)

const ExpertDialog = () => {
    const [selected, setSelected] = useState('Magic number')

    return (
        <Dialog role="dialog" aria-label="Expert">
            <DialogTitle>
                Expert - AGI EA V.1.1 (fix_edu_unlimited)
                <DialogTitleButton $first>?</DialogTitleButton>
                <DialogTitleButton aria-label="Close"><Icon name="thinClose" size={7} /></DialogTitleButton>
            </DialogTitle>
            <DialogTabs>
                <DialogTab>关于</DialogTab>
                <DialogTab>常用</DialogTab>
                <DialogTab $on>输入参数</DialogTab>
            </DialogTabs>
            <DialogPanel>
                <ParamBox>
                    <ParamTable>
                        <colgroup><col width="150" /><col /></colgroup>
                        <thead><tr><th>变量</th><th>赋值</th></tr></thead>
                        <tbody>
                            {params.map(([name, value, icon], i) => (
                                <ParamRow key={name} $odd={i % 2} $selected={name === selected} onClick={() => setSelected(name)}>
                                    <td><IconText><Icon name={icon} size={9} />{name}</IconText></td>
                                    <td>{value}</td>
                                </ParamRow>
                            ))}
                        </tbody>
                    </ParamTable>
                </ParamBox>
                <SideButtons>
                    <PushButton>加载(<u>L</u>)</PushButton>
                    <PushButton>保存(<u>S</u>)</PushButton>
                </SideButtons>
            </DialogPanel>
            <DialogFooter>
                <PushButton $primary $width={49}>确定</PushButton>
                <PushButton $width={49}>取消</PushButton>
                <PushButton $width={49}>重设</PushButton>
            </DialogFooter>
        </Dialog>
    )
}

const Orders = () => (
    <OrdersBox>
        <OrdersTable>
            <colgroup>{orderColumns.map(([name, width], i) => <col key={i} width={width || undefined} />)}</colgroup>
            <thead>
                <tr>{orderColumns.map(([name], i) => <th key={i}>{name}{i === 0 && <SortMark>/</SortMark>}</th>)}</tr>
            </thead>
            <tbody>
                <TotalRow>
                    <td colSpan={11}>
                        <IconText $gap={3}>
                            <svg width="5" height="5" viewBox="0 0 5 5"><circle cx="2.500" cy="2.500" r="2" fill="#ddd" stroke="#888" strokeWidth=".7" /></svg>
                            <span>余额: 3 019.44 USD&ensp;净值: 3 019.44&ensp;可用预付款: 3 019.44</span>
                        </IconText>
                    </td>
                    <td>0.00</td>
                    <td></td>
                </TotalRow>
                {orders.map(([id, second, side, price, hit], i) => (
                    <OrderRow key={id} $odd={i % 2} $hit={hit}>
                        <td><IconText $gap={3}><OrderIcon sell={side === 'sell'} />{id}</IconText></td>
                        <td>2025.07.24 11:02:{second}</td>
                        <td>{side} stop</td>
                        <td>0.01</td>
                        <td>eurusdecn</td>
                        <td>{price}&nbsp;</td>
                        <td></td><td></td><td></td><td></td><td></td>
                        <DeleteCell><CloseButton $pale aria-label={`Delete ${id}`}><Icon name="thinClose" size={5} /></CloseButton></DeleteCell>
                        <td></td>
                    </OrderRow>
                ))}
            </tbody>
        </OrdersTable>
        <ScrollTrack $width={6} $top={9}><ScrollThumb $height={36} /></ScrollTrack>
    </OrdersBox>
)

const Logo = () => (
    <LogoCard>
        <Watermark $x={-20} $y={18}>LOGOFREE.CN</Watermark>
        <Watermark $x={52} $y={28}>LOGOFREE.CN</Watermark>
        <Watermark $x={-24} $y={92}>LOGOFREE.CN</Watermark>
        <Watermark $x={120} $y={76}>LOGOFREE.CN</Watermark>
        <svg width="44" height="44" viewBox="0 0 44 44" fill="#0b4be8" stroke="#fff" strokeWidth="1.600">
            {[3, 2, 1, 0].map(i => (
                <path key={i} transform={`translate(${i * -4} ${i * 5})`} d="M13 0h17q3 0 4 3l9 22q1 3-3 3H24q-3 0-4-3L11 4q-1-4 2-4z" />
            ))}
        </svg>
        <LogoWords>
            <LogoName>精品EA</LogoName>
            <LogoSite>eaclubshare.com</LogoSite>
        </LogoWords>
    </LogoCard>
)

const terminalTabs = ['交易', '展示', '账户历史', '新闻', '警报', '邮箱', '市场', '文章', '代码库', 'EA', '日志']

const App = () => {
    const [tab, setTab] = useState('交易')

    return (
        <>
            <GlobalStyle />
            <Screen>
                <Desktop />
                <Window>
                    <MenuBar>
                        <Icon name="windows" size={9} />
                        {menus.map(name => <button key={name}>{name}</button>)}
                        <WindowControls>
                            <ControlButton aria-label="Minimize"><Icon name="minimize" size={8} /></ControlButton>
                            <ControlButton aria-label="Restore"><Icon name="restore" size={8} /></ControlButton>
                            <ControlButton aria-label="Close"><Icon name="close" size={8} /></ControlButton>
                        </WindowControls>
                    </MenuBar>
                    <Toolbars />
                    <Middle>
                        <LeftColumn>
                            <MarketWatch />
                            <Navigator />
                        </LeftColumn>
                        <ChartColumn>
                            <Chart />
                            <ChartTabs>
                                <Tab>XAUUSDecn,M1</Tab>
                                <Tab $on $wide>EURUSDecn,M15</Tab>
                                <Tab>USDJPYecn,M5</Tab>
                                <TabArrows><span>◀</span><span>▶</span></TabArrows>
                            </ChartTabs>
                            <ExpertDialog />
                        </ChartColumn>
                    </Middle>
                    <Terminal>
                        <TerminalSide>
                            <CloseButton aria-label="Close"><Icon name="close" size={6} /></CloseButton>
                            <SideLabel>终端</SideLabel>
                        </TerminalSide>
                        <TerminalMain>
                            <Orders />
                            <TabStrip>
                                {terminalTabs.map(name => (
                                    <Tab key={name} $on={name === tab} onClick={() => setTab(name)}>
                                        {name}{name === '邮箱' && <>&ensp;<MailCount>6</MailCount></>}
                                    </Tab>
                                ))}
                            </TabStrip>
                        </TerminalMain>
                        <Logo />
                    </Terminal>
                    <StatusBar>
                        {[76, 66, 46, 46, 43, 46, 43, 45].map((width, i) => <StatusCell key={i} $width={width} />)}
                    </StatusBar>
                    <InputBar>
                        <InputLogo>S</InputLogo>
                        <InputMode>A</InputMode>
                        <span>•,</span>
                        <Mic size={9} fill="currentColor" />
                        <Keyboard size={9} />
                        <Shirt size={9} color="#c05ad0" fill="#e0688c" />
                        <LayoutGrid size={8} fill="currentColor" />
                        <svg width="10" height="8" viewBox="0 0 10 8"><path d="M1 2h7v2H4v3H2z" fill="#e07020" /><path d="M8 1l2-1M8 4l2 1" stroke="#f0b020" /></svg>
                    </InputBar>
                </Window>
            </Screen>
        </>
    )
}

export default App
